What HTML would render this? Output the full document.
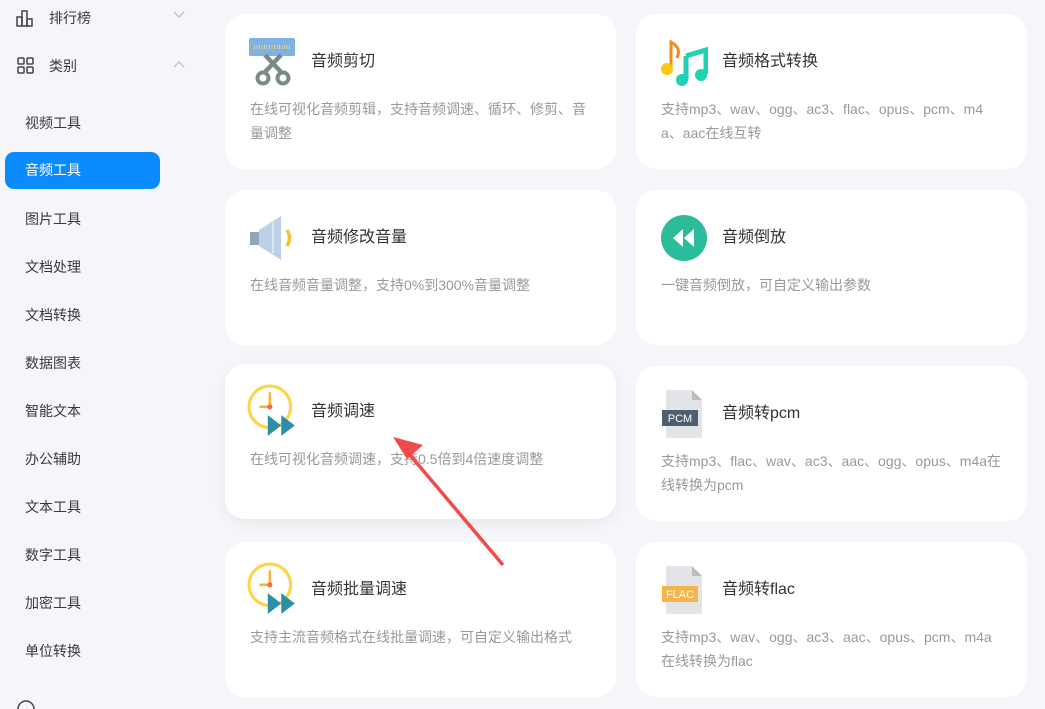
<!DOCTYPE html>
<html><head><meta charset="utf-8"><style>
*{margin:0;padding:0;box-sizing:border-box}
body{width:1045px;height:705px;overflow:hidden;background:#f5f5fa;font-family:"Liberation Sans","Noto Sans CJK SC",sans-serif;position:relative}
.side{position:absolute;left:0;top:0;width:200px;height:705px}
.item{position:absolute;left:25px;font-size:14px;color:#3a3a3a;line-height:20px}
.act{position:absolute;left:5px;top:152px;width:155px;height:37px;background:#0a8cff;border-radius:9px;color:#fff;font-size:14px;line-height:37px;padding-left:20px}
.card{position:absolute;width:391px;height:155px;background:#fff;border-radius:20px}
.card .ic{position:absolute;left:24px;top:24px;width:48px;height:48px}
.card .t{position:absolute;left:86px;top:37px;font-size:16px;color:#333;line-height:22px}
.card .d{position:absolute;left:25px;top:83px;width:345px;font-size:14px;color:#999;line-height:24px;word-break:break-all}
</style></head><body>
<div class="side">
<svg style="position:absolute;left:16px;top:10px" width="18" height="17" viewBox="0 0 18 17" fill="none" stroke="#444" stroke-width="1.5"><rect x="1" y="7" width="5" height="9"/><rect x="6" y="1" width="5" height="15"/><rect x="11" y="9" width="5" height="7"/></svg>
<div class="item" style="left:49px;top:8px">排行榜</div>
<svg style="position:absolute;left:173px;top:11px" width="12" height="8" viewBox="0 0 12 8"><path d="M1 1l5 5 5-5" stroke="#bbb" fill="none" stroke-width="1.2"/></svg>
<svg style="position:absolute;left:17px;top:57px" width="17" height="17" viewBox="0 0 17 17" fill="none" stroke="#444" stroke-width="1.5"><rect x="1" y="1" width="6" height="6" rx="1"/><rect x="10" y="1" width="6" height="6" rx="1"/><rect x="1" y="10" width="6" height="6" rx="1"/><rect x="10" y="10" width="6" height="6" rx="1"/></svg>
<div class="item" style="left:49px;top:56px">类别</div>
<svg style="position:absolute;left:173px;top:61px" width="12" height="8" viewBox="0 0 12 8"><path d="M1 6l5-5 5 5" stroke="#bbb" fill="none" stroke-width="1.2"/></svg>
<div class="item" style="top:113px">视频工具</div>
<div class="act">音频工具</div>
<div class="item" style="top:209px">图片工具</div>
<div class="item" style="top:257px">文档处理</div>
<div class="item" style="top:305px">文档转换</div>
<div class="item" style="top:353px">数据图表</div>
<div class="item" style="top:401px">智能文本</div>
<div class="item" style="top:449px">办公辅助</div>
<div class="item" style="top:497px">文本工具</div>
<div class="item" style="top:545px">数字工具</div>
<div class="item" style="top:593px">加密工具</div>
<div class="item" style="top:641px">单位转换</div>
<svg style="position:absolute;left:16px;top:699px" width="20" height="10"><circle cx="10" cy="10" r="8" fill="none" stroke="#444" stroke-width="1.5"/></svg>
</div>

<div class="card" style="left:225px;top:14px">
<svg class="ic" viewBox="0 0 48 48"><rect x="0" y="0" width="46" height="18" rx="2" fill="#7fb2e0"/><path d="M5 9h36" stroke="#e8d37a" stroke-width="4" stroke-dasharray="1 1.5"/><path d="M16 17l16 17M32 17L16 34" stroke="#7a8a88" stroke-width="4.5"/><circle cx="14" cy="40" r="5.5" fill="none" stroke="#7a8a88" stroke-width="4"/><circle cx="34" cy="40" r="5.5" fill="none" stroke="#7a8a88" stroke-width="4"/></svg>
<div class="t">音频剪切</div>
<div class="d">在线可视化音频剪辑，支持音频调速、循环、修剪、音量调整</div></div>

<div class="card" style="left:636px;top:14px">
<svg class="ic" viewBox="0 0 48 48"><path d="M11 30V4c5 3 10 7 6 16" stroke="#f58a1f" stroke-width="3" fill="none"/><circle cx="7" cy="31" r="6" fill="#fbc70f"/><path d="M26 18l20-6v24M26 18v24" stroke="#1ed2b2" stroke-width="5" fill="none"/><circle cx="22" cy="42" r="6" fill="#1ed2b2"/><circle cx="41" cy="37" r="6" fill="#1ed2b2"/></svg>
<div class="t">音频格式转换</div>
<div class="d" style="width:330px">支持mp3、wav、ogg、ac3、flac、opus、pcm、m4a、aac在线互转</div></div>

<div class="card" style="left:225px;top:190px">
<svg class="ic" viewBox="0 0 48 48"><rect x="1" y="18" width="10" height="13" fill="#8fa6bf"/><path d="M10 16l22-14v44L10 32z" fill="#bcd0e6"/><path d="M24 8v32" stroke="#fff" stroke-width="1.5" opacity=".6"/><path d="M38 16q5 8 0 16" stroke="#f3c234" stroke-width="3.5" fill="none"/></svg>
<div class="t">音频修改音量</div>
<div class="d">在线音频音量调整，支持0%到300%音量调整</div></div>

<div class="card" style="left:636px;top:190px">
<svg class="ic" viewBox="0 0 48 48"><circle cx="24" cy="24" r="23" fill="#2bbd9a"/><path d="M23 15l-10 9 10 9zM34 15l-10 9 10 9z" fill="#fff"/></svg>
<div class="t">音频倒放</div>
<div class="d">一键音频倒放，可自定义输出参数</div></div>

<div class="card" style="left:225px;top:364px;box-shadow:0 4px 14px rgba(0,0,0,.06)">
<svg class="ic" style="left:22px;top:20px;width:54px;height:54px" viewBox="0 0 52 52"><circle cx="22" cy="22" r="20" fill="#fff" stroke="#fbd54a" stroke-width="3"/><path d="M22 8v14h-10" stroke="#f3b63a" stroke-width="2.5" fill="none"/><circle cx="22" cy="22" r="2.5" fill="#ef6b4a"/><path d="M20 30l13 10-13 10zM33 30l13 10-13 10z" fill="#2c8fa8"/></svg>
<div class="t">音频调速</div>
<div class="d">在线可视化音频调速，支持0.5倍到4倍速度调整</div></div>

<div class="card" style="left:636px;top:366px">
<svg class="ic" viewBox="0 0 48 48"><path d="M6 0h26l10 10v38H6z" fill="#e2e4e7"/><path d="M32 0v10h10z" fill="#b9bec4"/><rect x="2" y="20" width="36" height="16" fill="#4f5f70"/><text x="20" y="32" font-size="11" fill="#fff" text-anchor="middle" font-family="Liberation Sans">PCM</text></svg>
<div class="t">音频转pcm</div>
<div class="d">支持mp3、flac、wav、ac3、aac、ogg、opus、m4a在线转换为pcm</div></div>

<div class="card" style="left:225px;top:542px">
<svg class="ic" style="left:22px;top:20px;width:54px;height:54px" viewBox="0 0 52 52"><circle cx="22" cy="22" r="20" fill="#fff" stroke="#fbd54a" stroke-width="3"/><path d="M22 8v14h-10" stroke="#f3b63a" stroke-width="2.5" fill="none"/><circle cx="22" cy="22" r="2.5" fill="#ef6b4a"/><path d="M20 30l13 10-13 10zM33 30l13 10-13 10z" fill="#2c8fa8"/></svg>
<div class="t">音频批量调速</div>
<div class="d">支持主流音频格式在线批量调速，可自定义输出格式</div></div>

<div class="card" style="left:636px;top:542px">
<svg class="ic" viewBox="0 0 48 48"><path d="M6 0h26l10 10v38H6z" fill="#e2e4e7"/><path d="M32 0v10h10z" fill="#b9bec4"/><rect x="2" y="20" width="36" height="16" fill="#f6b44b"/><text x="20" y="32" font-size="11" fill="#fff" text-anchor="middle" font-family="Liberation Sans">FLAC</text></svg>
<div class="t">音频转flac</div>
<div class="d" style="width:340px">支持mp3、wav、ogg、ac3、aac、opus、pcm、m4a在线转换为flac</div></div>

<svg style="position:absolute;left:0;top:0" width="1045" height="705"><path d="M503 565L410 455" stroke="#f24a4a" stroke-width="3.5"/><path d="M393 437l30 8-16 14z" fill="#f24a4a"/></svg>
</body></html>
